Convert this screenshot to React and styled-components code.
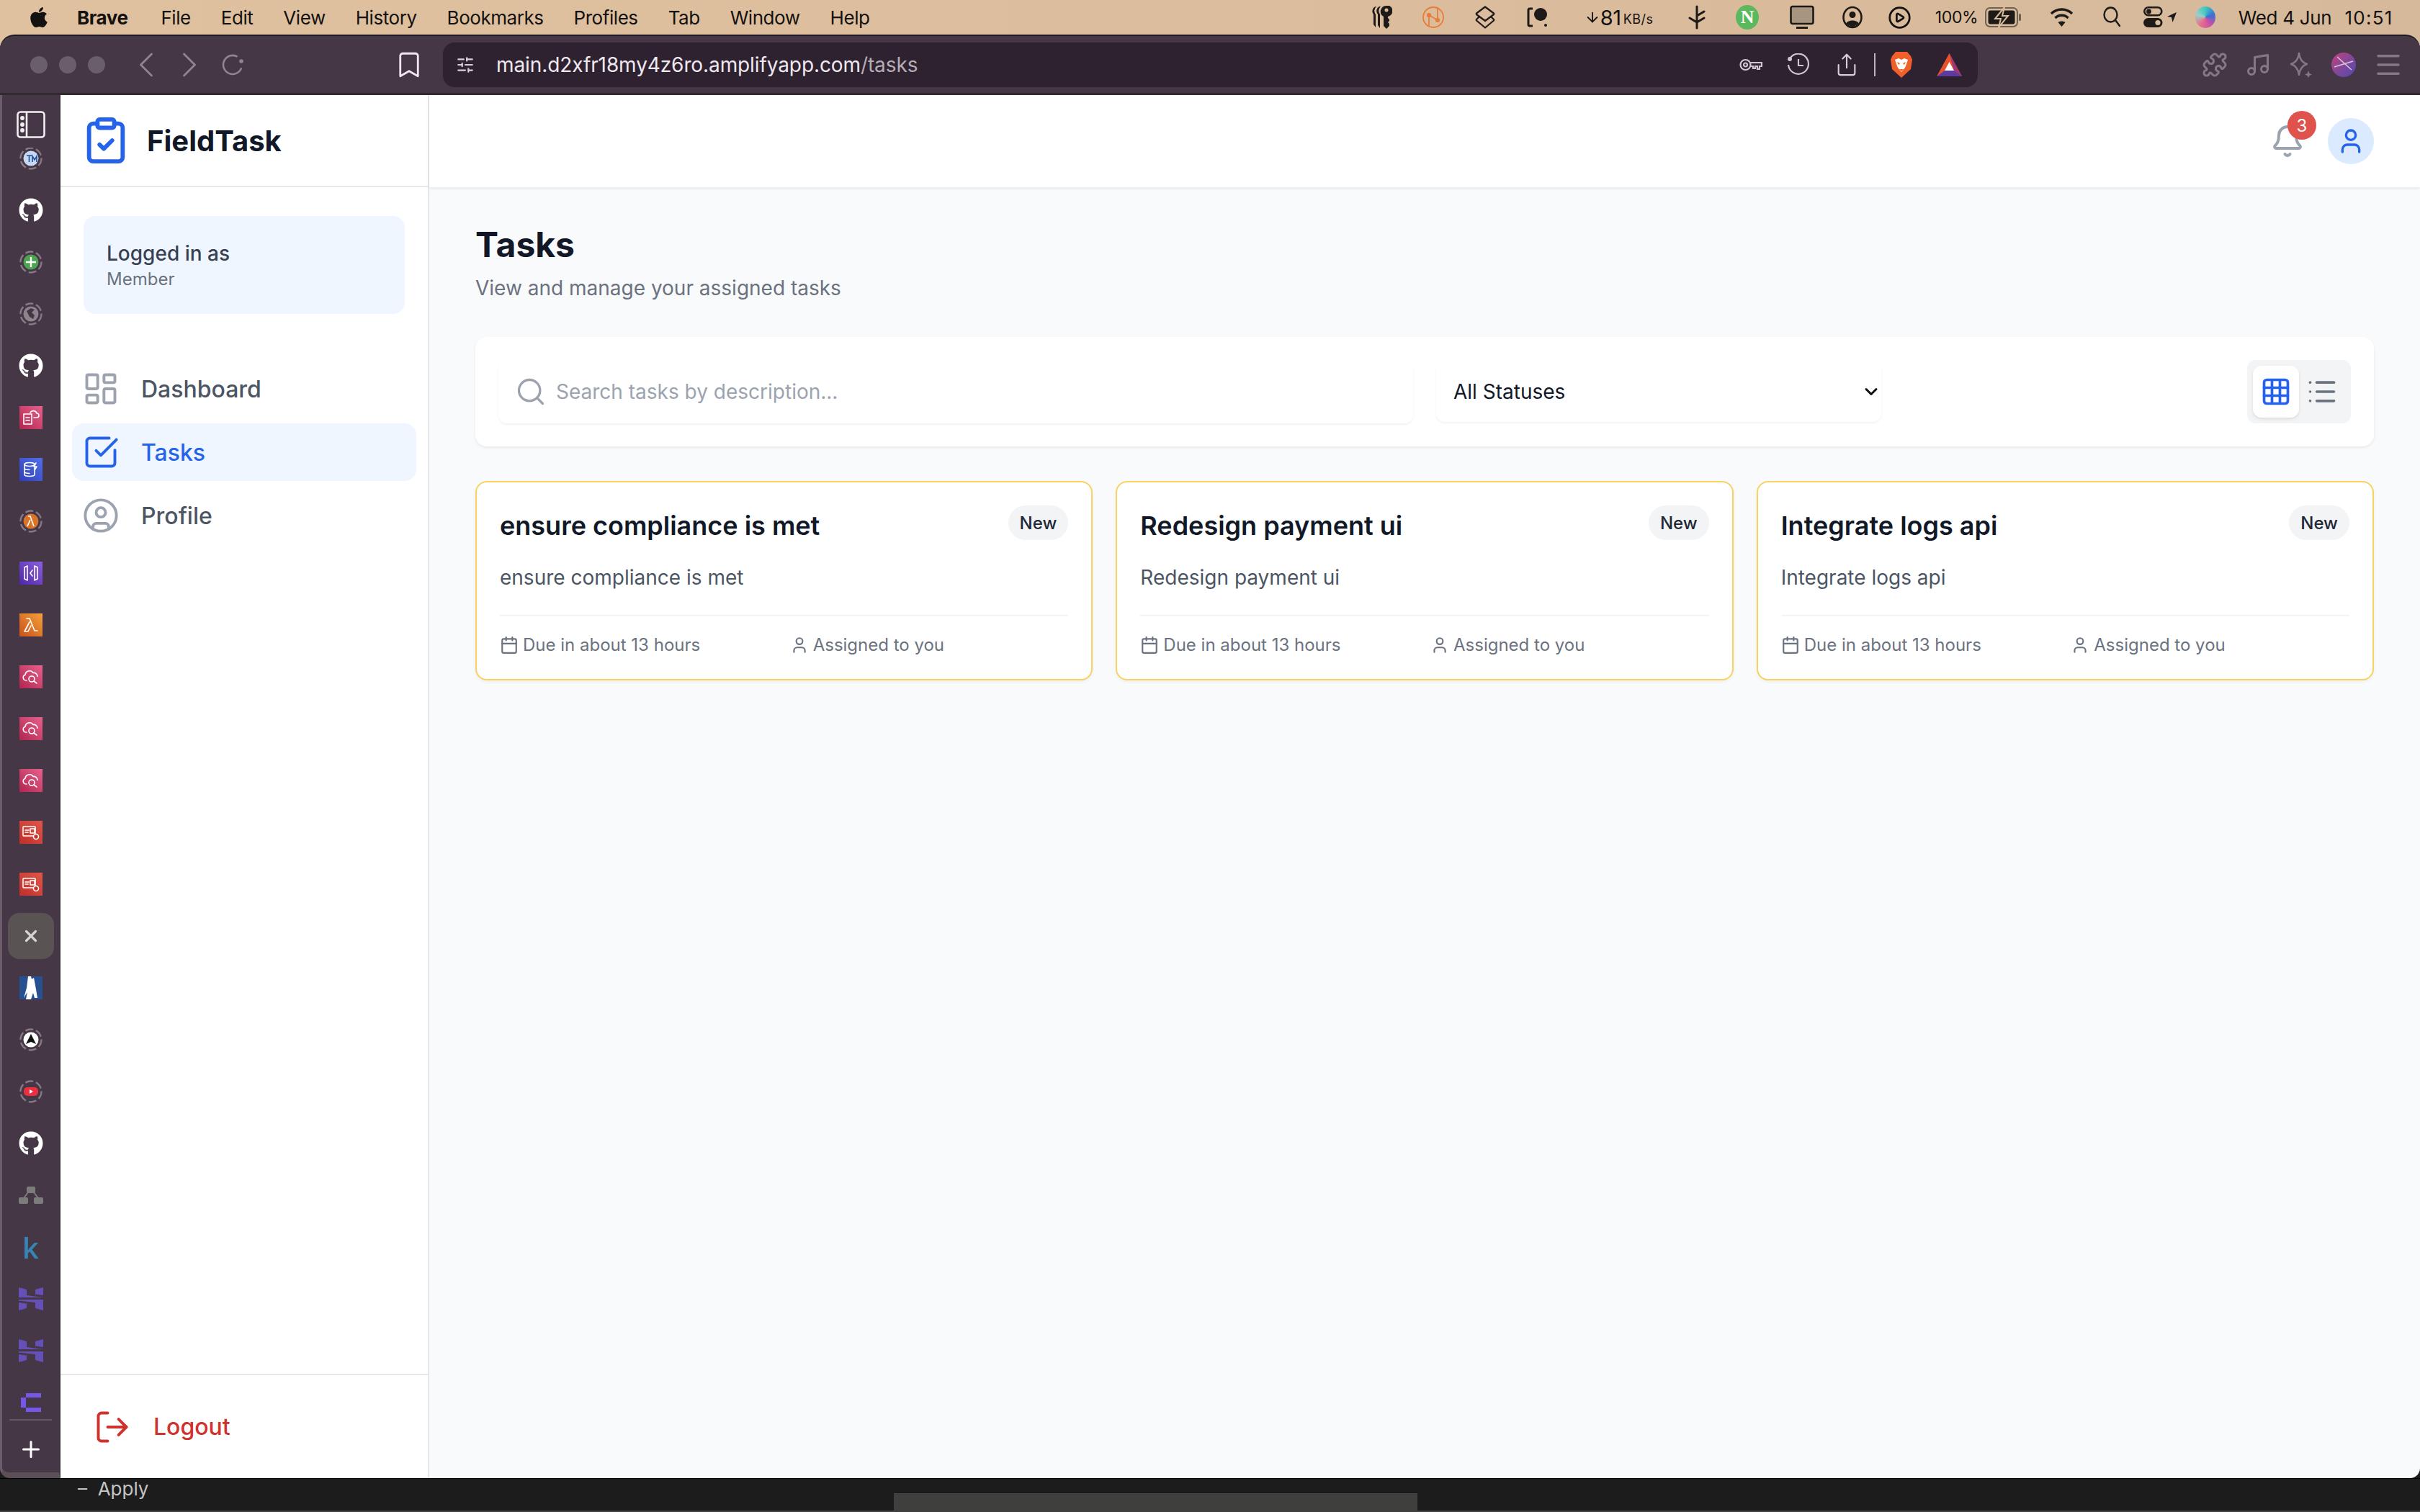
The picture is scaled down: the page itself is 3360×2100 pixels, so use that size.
import React from 'react';
import styled, { createGlobalStyle } from 'styled-components';
import { FaApple, FaGithub } from 'react-icons/fa';
import {
  Bell, Calendar, ChevronDown, ChevronLeft, ChevronRight, CircleUser, ClipboardCheck, Grid3x3,
  LayoutDashboard, List, LogOut, Search, SquareCheckBig, User, X, Plus,
  Bookmark, SlidersHorizontal, Share, Puzzle, Music, Menu, CirclePlay, ArrowDown,
} from 'lucide-react';

const GlobalStyle = createGlobalStyle`
  html, body { margin: 0; padding: 0; background: #1c1c1c; }
  * { box-sizing: border-box; }
  body { font-family: Inter, "Noto Sans", sans-serif; }
`;

const Screen = styled.div`
  width: 3360px;
  height: 2100px;
  display: flex;
  flex-direction: column;
  overflow: hidden;
  background: linear-gradient(90deg, #dfc19f 0%, #dcbd9d 50%, #d6b99b 100%);
`;

/* macOS menu bar */
const MenuBar = styled.div`
  height: 48px;
  flex: none;
  display: flex;
  align-items: center;
  justify-content: space-between;
  padding-left: 40px;
  padding-right: 36px;
  color: #141210;
  font-size: 26px;
`;
const MenuLeft = styled.div`
  display: flex;
  align-items: center;
  gap: 42px;
`;
const AppleMark = styled.span`
  display: flex;
  width: 28px;
  margin-right: -3px;
`;
const MenuItem = styled.span`
  font-weight: ${(p) => (p.$bold ? 700 : 400)};
  margin-right: ${(p) => (p.$bold ? 4 : 0)}px;
  letter-spacing: -0.45px;
`;
const StatusRow = styled.div`
  display: flex;
  align-items: center;
  height: 100%;
`;
const StatusSlot = styled.span`
  width: ${(p) => p.$w}px;
  margin-left: ${(p) => p.$gap || 0}px;
  flex: none;
  display: flex;
  align-items: center;
  justify-content: center;
  font-size: ${(p) => p.$size || 24}px;
  letter-spacing: ${(p) => p.$track ?? -0.3}px;
  white-space: nowrap;
  svg { flex: none; }
`;
const SpeedUnit = styled.span`
  font-size: 18px;
  letter-spacing: 0.4px;
  margin-left: 3px;
  margin-top: 4px;
`;
const GreenDot = styled.span`
  width: 32px;
  height: 34px;
  border-radius: 50%;
  background: #5cb85c;
  color: #fff;
  font-family: "Liberation Serif", serif;
  font-weight: 700;
  font-size: 26px;
  display: flex;
  align-items: center;
  justify-content: center;
`;
const SiriDot = styled.span`
  width: 28px;
  height: 30px;
  border-radius: 50%;
  background: conic-gradient(#40c8c0, #3b6fd6, #c84fa8, #e8708a, #9ad0c8, #40c8c0);
`;

/* browser window */
const BrowserWindow = styled.div`
  flex: 1;
  min-height: 0;
  display: flex;
  flex-direction: column;
  border-radius: 20px 20px 0 0;
  background: #1c1c1c;
  border-top: 2px solid #1f1a1f;
  overflow: hidden;
`;
const Toolbar = styled.div`
  height: 82px;
  flex: none;
  display: flex;
  align-items: center;
  background: #463746;
  border-bottom: 3px solid #302a30;
  padding-left: 42px;
  color: #8f858f;
`;
const TrafficLights = styled.div`
  display: flex;
  gap: 16px;
  width: 131px;
`;
const Light = styled.span`
  width: 24px;
  height: 24px;
  border-radius: 50%;
  background: #6b5e6b;
`;
const NavButtons = styled.div`
  display: flex;
  align-items: center;
  width: 374px;
`;
const BookmarkSlot = styled.div`
  display: flex;
  width: 68px;
  color: #efe9ef;
`;
const UrlBar = styled.div`
  width: 2131px;
  height: 62px;
  flex: none;
  display: flex;
  align-items: center;
  background: #2e2230;
  border-radius: 16px;
  padding-left: 18px;
  color: #d8d0d8;
`;
const UrlText = styled.span`
  margin-left: 30px;
  flex: 1;
  font-size: 28px;
  color: #efe8ef;
  letter-spacing: -0.1px;
`;
const UrlPath = styled.span`
  color: #b5abb5;
`;
const UrlIcons = styled.div`
  display: flex;
  align-items: center;
  gap: 34px;
  padding-right: 22px;
`;
const UrlDivider = styled.span`
  width: 2px;
  height: 32px;
  margin: 0 -13px;
  background: #bdb4bd;
`;
const ExtensionIcons = styled.div`
  display: flex;
  align-items: center;
  gap: 24px;
  margin-left: 311px;
  color: #837983;
`;
const Workspace = styled.div`
  flex: 1;
  min-height: 0;
  display: flex;
  border-bottom: 1px solid #000;
`;

/* vertical tab strip */
const TabStrip = styled.div`
  width: 84px;
  flex: none;
  display: flex;
  flex-direction: column;
  background: #463746;
  border-left: 3px solid #6a5c69;
  border-right: 2px solid #3d3240;
  border-bottom: 8px solid #5c5058;
  border-radius: 0 0 0 14px;
`;
const StripToggle = styled.div`
  height: 73px;
  flex: none;
  display: flex;
  align-items: center;
  justify-content: center;
  color: #f2eef2;
  padding-top: 8px;
`;
const TabList = styled.div`
  flex: 1;
  min-height: 0;
  overflow: hidden;
`;
const TabItem = styled.div`
  height: 72px;
  display: flex;
  align-items: center;
  justify-content: center;
  &:first-child { margin-top: -21px; }
`;
const TabClose = styled.div`
  width: 64px;
  height: 64px;
  border-radius: 16px;
  background: #595354;
  color: #d5d2d2;
  display: flex;
  align-items: center;
  justify-content: center;
`;
const ServiceTile = styled.div`
  width: 32px;
  height: 32px;
  background: linear-gradient(45deg, ${(p) => p.$from}, ${(p) => p.$to});
  display: flex;
  align-items: center;
  justify-content: center;
`;
const GithubMark = styled(FaGithub)`
  color: #fff;
`;
const StripDivider = styled.div`
  height: 2px;
  margin: 8px 10px 0;
  flex: none;
  background: #625762;
`;
const StripPlus = styled.div`
  height: 72px;
  flex: none;
  padding-top: 8px;
  display: flex;
  align-items: center;
  justify-content: center;
  color: #fff;
`;
const KLetter = styled.span`
  color: #3585b5;
  font-size: 40px;
  font-weight: 600;
  font-family: "Open Sans", sans-serif;
`;

/* FieldTask app */
const AppShell = styled.div`
  flex: 1;
  min-width: 0;
  display: flex;
  background: #f9fafb;
  border-radius: 0 0 14px 0;
  overflow: hidden;
`;
const Sidebar = styled.aside`
  width: 512px;
  flex: none;
  display: flex;
  flex-direction: column;
  background: #fff;
  border-right: 2px solid #e5e7eb;
`;
const Brand = styled.div`
  height: 128px;
  flex: none;
  display: flex;
  align-items: center;
  gap: 22px;
  padding-left: 28px;
  border-bottom: 2px solid #e5e7eb;
  color: #2563eb;
`;
const BrandName = styled.span`
  font-size: 40px;
  font-weight: 700;
  color: #111827;
`;
const UserCard = styled.div`
  margin: 40px 32px 0;
  height: 136px;
  padding: 32px;
  background: #eff6ff;
  border-radius: 16px;
`;
const UserLabel = styled.div`
  font-size: 28px;
  line-height: 40px;
  font-weight: 500;
  color: #374151;
`;
const UserRole = styled.div`
  font-size: 24px;
  line-height: 32px;
  color: #6b7280;
`;
const Nav = styled.nav`
  margin-top: 64px;
  padding: 0 16px;
  display: flex;
  flex-direction: column;
  gap: 8px;
  flex: 1;
`;
const NavItem = styled.div`
  height: 80px;
  display: flex;
  align-items: center;
  gap: 30px;
  padding-left: 14px;
  border-radius: 16px;
  font-size: 32px;
  font-weight: 500;
  background: ${(p) => (p.$active ? '#eff6ff' : 'transparent')};
  color: ${(p) => (p.$active ? '#2563eb' : '#4b5563')};
  svg { color: ${(p) => (p.$active ? '#2563eb' : '#9ca3af')}; flex: none; }
`;
const LogoutRow = styled.div`
  height: 145px;
  flex: none;
  border-top: 2px solid #e5e7eb;
  display: flex;
  align-items: center;
  gap: 31px;
  padding-left: 46px;
  color: #d0312d;
  font-size: 32px;
  font-weight: 500;
`;
const Main = styled.main`
  flex: 1;
  min-width: 0;
  display: flex;
  flex-direction: column;
`;
const TopBar = styled.header`
  height: 128px;
  flex: none;
  display: flex;
  align-items: center;
  justify-content: flex-end;
  gap: 32px;
  padding-right: 64px;
  background: #fff;
  box-shadow: 0 2px 4px rgba(0, 0, 0, 0.08);
`;
const BellWrap = styled.div`
  position: relative;
  width: 48px;
  height: 48px;
  color: #9ca3af;
`;
const BellBadge = styled.span`
  position: absolute;
  top: -18px;
  right: -16px;
  width: 40px;
  height: 40px;
  border-radius: 50%;
  background: #e0524c;
  color: #fff;
  font-size: 24px;
  display: flex;
  align-items: center;
  justify-content: center;
`;
const Avatar = styled.div`
  width: 64px;
  height: 64px;
  border-radius: 50%;
  background: #dbeafe;
  color: #2563eb;
  display: flex;
  align-items: center;
  justify-content: center;
`;
const Content = styled.div`
  padding: 48px 64px;
`;
const PageTitle = styled.h1`
  margin: 0;
  font-size: 48px;
  line-height: 64px;
  font-weight: 700;
  color: #111827;
`;
const PageSub = styled.p`
  margin: 8px 0 0;
  font-size: 28px;
  line-height: 40px;
  color: #6b7280;
`;
const FilterCard = styled.div`
  margin-top: 48px;
  height: 152px;
  padding: 32px;
  display: flex;
  align-items: center;
  background: #fff;
  border-radius: 16px;
  box-shadow: 0 2px 4px rgba(0, 0, 0, 0.07);
`;
const SearchBox = styled.div`
  width: 1270px;
  height: 88px;
  display: flex;
  align-items: center;
  gap: 13px;
  padding-left: 23px;
  border-radius: 12px;
  background: #fff;
  box-shadow: 0 2px 3px rgba(0, 0, 0, 0.05);
  color: #9ca3af;
  font-size: 28px;
`;
const StatusSelect = styled.div`
  width: 618px;
  height: 84px;
  margin-left: 32px;
  display: flex;
  align-items: center;
  justify-content: space-between;
  padding: 0 0 0 24px;
  border-radius: 12px;
  background: #fff;
  box-shadow: 0 2px 3px rgba(0, 0, 0, 0.05);
  color: #111827;
  font-size: 28px;
`;
const ViewToggle = styled.div`
  margin-left: auto;
  width: 144px;
  height: 88px;
  padding: 8px;
  display: flex;
  background: #f3f4f6;
  border-radius: 12px;
`;
const ViewButton = styled.div`
  width: 64px;
  height: 72px;
  display: flex;
  align-items: center;
  justify-content: center;
  border-radius: 12px;
  background: ${(p) => (p.$active ? '#fff' : 'transparent')};
  box-shadow: ${(p) => (p.$active ? '0 2px 4px rgba(0, 0, 0, 0.1)' : 'none')};
  color: ${(p) => (p.$active ? '#2563eb' : '#6b7280')};
`;
const TaskGrid = styled.div`
  margin-top: 48px;
  display: grid;
  grid-template-columns: repeat(3, 1fr);
  gap: 32px;
`;
const TaskCard = styled.article`
  height: 277px;
  padding: 32px;
  background: #fff;
  border: 2px solid #f9d262;
  border-radius: 16px;
  box-shadow: 0 2px 4px rgba(0, 0, 0, 0.05);
`;
const TaskHead = styled.div`
  display: flex;
  justify-content: space-between;
  align-items: flex-start;
`;
const TaskTitle = styled.h3`
  margin: 0;
  font-size: 36px;
  line-height: 56px;
  font-weight: 600;
  color: #111827;
`;
const StatusBadge = styled.span`
  height: 48px;
  padding: 0 16px;
  display: flex;
  align-items: center;
  border-radius: 24px;
  background: #f3f4f6;
  color: #1f2937;
  font-size: 24px;
  font-weight: 500;
`;
const TaskDesc = styled.p`
  margin: 24px 0 0;
  font-size: 28px;
  line-height: 40px;
  color: #4b5563;
`;
const TaskFooter = styled.div`
  margin-top: 32px;
  padding-top: 24px;
  border-top: 2px solid #f3f4f6;
  display: grid;
  grid-template-columns: 1fr 1fr;
  gap: 16px;
`;
const TaskMeta = styled.div`
  display: flex;
  align-items: center;
  gap: 6px;
  font-size: 24px;
  line-height: 32px;
  color: #6b7280;
`;
const BottomBar = styled.div`
  height: 46px;
  flex: none;
  display: flex;
  align-items: flex-start;
  background: #1c1c1c;
  border-bottom: 2px solid #444;
  color: #c4c4c4;
  font-size: 26px;
  line-height: 28px;
`;
const ApplyLabel = styled.span`
  width: 1241px;
  flex: none;
  padding-left: 108px;
`;
const PreviewThumb = styled.div`
  width: 727px;
  height: 29px;
  margin-top: 18px;
  background: #3f3f3d;
  border-top: 1px solid #000;
`;

const TabGlyph = ({ children }) => (
  <svg width="26" height="26" viewBox="0 0 26 26" fill="none" stroke="#fff" strokeWidth="1.6" strokeLinecap="round" strokeLinejoin="round">
    {children}
  </svg>
);

const CloudSearch = () => (
  <TabGlyph>
    <path d="M7 18H6a4 4 0 0 1-1-7.8A6 6 0 0 1 16 7.5a5 5 0 0 1 6 5" />
    <circle cx="14" cy="16" r="4" />
    <path d="m17 19 4 3" />
  </TabGlyph>
);

const IdCard = () => (
  <TabGlyph>
    <rect x="2" y="5" width="17" height="13" rx="1" />
    <path d="M5 10h5M5 13h4" />
    <rect x="12" y="8" width="6" height="6" />
    <circle cx="20" cy="19" r="3.5" fill="#c5332e" />
  </TabGlyph>
);

const Lambda = () => (
  <TabGlyph>
    <path d="M7 4h4l7 17h4M11 9 4 22h5l4-8" />
  </TabGlyph>
);

const tile = (from, to, glyph) => <ServiceTile $from={from} $to={to}>{glyph}</ServiceTile>;

const RingIcon = ({ fill, children }) => (
  <svg width="32" height="32" viewBox="0 0 32 32">
    <circle cx="16" cy="16" r="14.5" fill="none" stroke="#857a85" strokeWidth="2.4" strokeDasharray="11 4" />
    <circle cx="16" cy="16" r="10.5" fill={fill} />
    {children}
  </svg>
);

const HLogo = () => (
  <svg width="34" height="32" viewBox="0 0 34 32" fill="#6550b8">
    <path d="M0 0l11 3v8l23 3H0z" />
    <path d="M23 3l11-3v11l-11-1.500z" />
    <path d="M0 17h34v15l-11-3v-8L0 18.500z" />
    <path d="M0 21l11 1.500V29L0 32z" />
  </svg>
);

const GithubTab = () => <GithubMark size={34} />;

const tabs = [
  <RingIcon fill="#c7d8f0"><path d="M10 12h7M13.500 12v9M18 21v-8l3 5 3-5v8" fill="none" stroke="#1f4fa0" strokeWidth="1.6" /></RingIcon>,
  <GithubTab />,
  <RingIcon fill="#4ca350"><path d="M16 9v14M9 16h14" stroke="#fff" strokeWidth="2.4" /></RingIcon>,
  <RingIcon fill="#8d848d"><path d="M10 12l6-4 5 2-4 4 4 4-2 5-5-3z" fill="#463746" /></RingIcon>,
  <GithubTab />,
  tile('#b0264f', '#e8608c', <TabGlyph><rect x="3" y="8" width="11" height="14" /><path d="M6 13h5M6 17h5M12 6a5 5 0 0 1 9 1 3 3 0 0 1 0 6h-4" /></TabGlyph>),
  tile('#2e3fb8', '#5270e8', <TabGlyph><ellipse cx="11" cy="6" rx="7" ry="2.5" /><path d="M4 6v14c0 1.500 3 2.500 7 2.500s7-1 7-2.500V6M4 11c0 1.500 3 2.500 7 2.500M4 16c0 1.500 3 2.500 7 2.500M20 4l-3 5h4l-3 5" /></TabGlyph>),
  <RingIcon fill="#d9742a"><path d="M12 9h3l5 14M15 14l-4 9" fill="none" stroke="#fff" strokeWidth="1.6" /></RingIcon>,
  tile('#4d27a8', '#8c5fe0', <TabGlyph><path d="M8 3 4 5v16l4 2zM18 3l4 2v16l-4 2zM15 9l-3 4 3 4" /></TabGlyph>),
  tile('#c8511b', '#f5a13a', <Lambda />),
  tile('#b0264f', '#e8608c', <CloudSearch />),
  tile('#b0264f', '#e8608c', <CloudSearch />),
  tile('#b0264f', '#e8608c', <CloudSearch />),
  tile('#bd2f2a', '#e0574a', <IdCard />),
  tile('#bd2f2a', '#e0574a', <IdCard />),
  <TabClose><X size={26} strokeWidth={3} /></TabClose>,
  <ServiceTile $from="#26508f" $to="#26508f">
    <svg width="26" height="32" viewBox="0 0 26 32" fill="#fff"><path d="M9 0h4l1 4 3-2 3 16 2 12h-4l-2-7-3 9H6l2-10-5 8 4-14z" /></svg>
  </ServiceTile>,
  <RingIcon fill="#fff"><path d="M16 8l7 14-7-3-7 3z" fill="#111" /></RingIcon>,
  <RingIcon fill="none"><rect x="6" y="10" width="20" height="12" rx="5" fill="#ec2f3f" /><path d="M14 13l5 3-5 3z" fill="#fff" /></RingIcon>,
  <GithubTab />,
  <svg width="34" height="24" viewBox="0 0 34 24" fill="#7c7c7c"><rect x="11" y="0" width="12" height="9" rx="2" /><rect x="0" y="15" width="13" height="9" rx="2" /><rect x="21" y="15" width="13" height="9" rx="2" /><path d="M13 8l-6 8M21 8l6 8" stroke="#7c7c7c" strokeWidth="2" /></svg>,
  <KLetter>k</KLetter>,
  <HLogo />,
  <HLogo />,
  <svg width="28" height="26" viewBox="0 0 28 26" fill="#7558e8"><path d="M7 0h21v6H7zM0 6h7v14H0zM7 20h21v6H7z" /></svg>,
];

const tasks = ['ensure compliance is met', 'Redesign payment ui', 'Integrate logs api'];

const ink = '#1d1a17';

function StatusIcons() {
  return (
    <StatusRow>
      <StatusSlot $w={28}>
        <svg width="28" height="32" viewBox="0 0 28 32" fill={ink}>
          <path d="M5 1a7 7 0 0 0-3 11v14l3 4V12a8 8 0 0 1 1-11z" />
          <path d="M10 1a7 7 0 0 0-2 11v15l3 4V12a8 8 0 0 1 1-11z" />
          <path d="M20 0a8 8 0 0 0-4 15v13l4 4 4-4v-3l-2-2 2-2v-2l-2-2V15a8 8 0 0 0 2-15zm0 3.500a2.500 2.500 0 1 1 0 5 2.500 2.500 0 0 1 0-5z" fillRule="evenodd" />
        </svg>
      </StatusSlot>
      <StatusSlot $w={30} $gap={42}>
        <svg width="30" height="30" viewBox="0 0 30 30" fill="none" stroke="#e97c35" strokeWidth="1.8">
          <circle cx="15" cy="15" r="14" />
          <path d="M9 28V12l12 7V1" />
          <circle cx="9" cy="12" r="2.200" fill="#e97c35" />
          <circle cx="21" cy="19" r="2.200" fill="#e97c35" />
        </svg>
      </StatusSlot>
      <StatusSlot $w={28} $gap={43}>
        <svg width="28" height="32" viewBox="0 0 28 32" fill="none" stroke={ink} strokeWidth="2.2" strokeLinejoin="round">
          <path d="M14 1.500 26 10.500a1 1 0 0 1 0 1.500L14 21 2 12a1 1 0 0 1 0-1.500z" />
          <path d="M6 15 2 19a1 1 0 0 0 0 1.500L14 30.500 26 20.500a1 1 0 0 0 0-1.500l-4-4" />
        </svg>
      </StatusSlot>
      <StatusSlot $w={30} $gap={44}>
        <svg width="30" height="28" viewBox="0 0 30 28" fill={ink}>
          <path d="M8 2H4a2 2 0 0 0-2 2v20a2 2 0 0 0 2 2h4" fill="none" stroke={ink} strokeWidth="3" />
          <circle cx="19" cy="10" r="9" />
          <circle cx="26" cy="25" r="2" />
        </svg>
      </StatusSlot>
      <StatusSlot $w={95} $gap={50} $size={29}>
        <ArrowDown size={22} strokeWidth={2} />81<SpeedUnit>KB/s</SpeedUnit>
      </StatusSlot>
      <StatusSlot $w={24} $gap={49}>
        <svg width="24" height="34" viewBox="0 0 24 34" fill="none" stroke={ink} strokeWidth="3" strokeLinecap="round">
          <path d="M12 2v30M2 18l10 6 10-6M22 9l-10 6" />
        </svg>
      </StatusSlot>
      <StatusSlot $w={32} $gap={42}><GreenDot>N</GreenDot></StatusSlot>
      <StatusSlot $w={34} $gap={43}>
        <svg width="34" height="34" viewBox="0 0 34 34">
          <rect x="1.500" y="2" width="31" height="24" rx="2.500" fill="#a8957f" stroke={ink} strokeWidth="2.600" />
          <rect x="9" y="30" width="16" height="3" fill={ink} />
        </svg>
      </StatusSlot>
      <StatusSlot $w={28} $gap={39}>
        <svg width="28" height="32" viewBox="0 0 28 32">
          <ellipse cx="14" cy="16" rx="12.500" ry="14" fill="none" stroke={ink} strokeWidth="2.600" />
          <circle cx="14" cy="12.500" r="4.500" fill={ink} />
          <path d="M5 25c2-6 16-6 18 0l-9 5z" fill={ink} />
        </svg>
      </StatusSlot>
      <StatusSlot $w={28} $gap={37}><CirclePlay size={33} strokeWidth={2} /></StatusSlot>
      <StatusSlot $w={57} $gap={37} $size={23}>100%</StatusSlot>
      <StatusSlot $w={50} $gap={11}>
        <svg width="50" height="28" viewBox="0 0 50 28">
          <rect x="1" y="1" width="44" height="26" rx="6" fill="none" stroke="#6f6250" strokeWidth="2" />
          <rect x="4.500" y="4.500" width="37" height="19" rx="3" fill={ink} />
          <rect x="47" y="9" width="3" height="10" rx="1.500" fill="#6f6250" />
          <path d="M27 0 14 16h8l-3 12 13-16h-8z" fill={ink} stroke="#d9bc9c" strokeWidth="2" />
        </svg>
      </StatusSlot>
      <StatusSlot $w={33} $gap={40}>
        <svg width="33" height="28" viewBox="0 0 33 28" fill="none" stroke={ink} strokeWidth="3.400">
          <path d="M2 9c8-8 21-8 29 0M7.500 15c5-5 13-5 18 0" />
          <path d="M16.500 27l-5-6c3-2 7-2 10 0z" fill={ink} stroke="none" />
        </svg>
      </StatusSlot>
      <StatusSlot $w={24} $gap={41}>
        <svg width="24" height="30" viewBox="0 0 24 30" fill="none" stroke={ink} strokeWidth="2.400" strokeLinecap="round">
          <ellipse cx="10.500" cy="11.500" rx="9" ry="10" />
          <path d="m17 19 6 8" />
        </svg>
      </StatusSlot>
      <StatusSlot $w={46} $gap={32}>
        <svg width="46" height="30" viewBox="0 0 46 30" fill={ink}>
          <rect x="1.300" y="1.300" width="24" height="11" rx="5.500" fill="none" stroke={ink} strokeWidth="2.600" />
          <circle cx="7.500" cy="7" r="3.400" />
          <rect x="0" y="16" width="26.500" height="13" rx="6.500" />
          <circle cx="20" cy="22.500" r="3.600" fill="#d9bd9d" />
          <path d="M46 8l-13 6 6 1 1.500 7z" />
        </svg>
      </StatusSlot>
      <StatusSlot $w={28} $gap={26}><SiriDot /></StatusSlot>
      <StatusSlot $w={127} $gap={33} $size={26}>Wed 4 Jun</StatusSlot>
      <StatusSlot $w={70} $gap={18} $size={26} $track={1.2}>10:51</StatusSlot>
    </StatusRow>
  );
}

export default function App() {
  return (
    <Screen>
      <GlobalStyle />
      <MenuBar>
        <MenuLeft>
          <AppleMark><FaApple size={32} /></AppleMark>
          <MenuItem $bold>Brave</MenuItem>
          {['File', 'Edit', 'View', 'History', 'Bookmarks', 'Profiles', 'Tab', 'Window', 'Help'].map((m) => (
            <MenuItem key={m}>{m}</MenuItem>
          ))}
        </MenuLeft>
        <StatusIcons />
      </MenuBar>

      <BrowserWindow>
        <Toolbar>
          <TrafficLights><Light /><Light /><Light /></TrafficLights>
          <NavButtons>
            <ChevronLeft size={60} strokeWidth={1.1} />
            <ChevronRight size={60} strokeWidth={1.1} />
            <svg width="60" height="36" viewBox="-14 0 60 36" fill="none" stroke="currentColor" strokeWidth="2.600">
              <path d="M22.500 6.700A13 13 0 1 0 28.200 22.400" />
              <circle cx="28" cy="13" r="2.800" fill="currentColor" stroke="none" />
            </svg>
          </NavButtons>
          <BookmarkSlot><Bookmark size={42} strokeWidth={1.6} /></BookmarkSlot>
          <UrlBar>
            <SlidersHorizontal size={26} />
            <UrlText>main.d2xfr18my4z6ro.amplifyapp.com<UrlPath>/tasks</UrlPath></UrlText>
            <UrlIcons>
              <svg width="32" height="18" viewBox="0 0 32 18" fill="none" stroke="#cfc7cf" strokeWidth="2.200">
                <circle cx="8.500" cy="9" r="7" />
                <circle cx="8.500" cy="9" r="2.500" />
                <path d="M15.500 6H31v5h-3v4h-3v-4h-3v3h-3v-3h-3.500" />
              </svg>
              <svg width="32" height="32" viewBox="0 0 32 32" fill="none" stroke="#cfc7cf" strokeWidth="2.200">
                <path d="M5 6a14 14 0 1 1-3 10" />
                <circle cx="4" cy="8" r="3" fill="#cfc7cf" stroke="none" />
                <path d="M16 8v9h7" />
              </svg>
              <Share size={34} strokeWidth={1.5} />
              <UrlDivider />
              <svg width="30" height="36" viewBox="0 0 30 36">
                <path d="M7 0h16l5 6 2 5-2 13-13 12L2 24 0 11l2-5z" fill="#f1602b" />
                <path d="M6 11l5-2 4 2 4-2 5 2-2 6-2 5-5 6-5-6-2-5z" fill="#fff" />
                <path d="M9 14l4 2-2 2zM21 14l-4 2 2 2zM12 24h6l-3 3zM15 17v6" fill="#f1602b" />
              </svg>
              <svg width="35" height="32" viewBox="0 0 35 32">
                <path d="M17.500 0 35 32H0z" fill="#e8532a" />
                <path d="M17.500 0 35 32 24 24z" fill="#a0367a" />
                <path d="M0 32l11-8h13l11 8z" fill="#5c3a9e" />
                <path d="M17.500 12 24 24H11z" fill="#fff" />
              </svg>
            </UrlIcons>
          </UrlBar>
          <ExtensionIcons>
            <Puzzle size={36} strokeWidth={2} />
            <Music size={36} strokeWidth={2} />
            <svg width="36" height="36" viewBox="0 0 36 36" fill="none" stroke="currentColor" strokeWidth="2.400" strokeLinejoin="round">
              <path d="M15 2c1 9 5 13 11 15-6 2-10 6-11 15-1-9-5-13-11-15 6-2 10-6 11-15z" />
              <path d="M28 26l1.500 4 3.500 1.500-3.500 1.500L28 36l-1.500-3-3.500-1.500 3.500-1.500z" fill="currentColor" stroke="none" />
            </svg>
            <svg width="34" height="34" viewBox="0 0 34 34">
              <defs>
                <linearGradient id="ava" x1="0" y1="0" x2="1" y2="1">
                  <stop offset="0" stopColor="#c2437e" />
                  <stop offset="1" stopColor="#4a4ab0" />
                </linearGradient>
              </defs>
              <circle cx="17" cy="17" r="17" fill="url(#ava)" />
              <path d="M8 6l20 18M4 20l26-8" stroke="#d8c8d8" strokeWidth="1.500" />
            </svg>
            <Menu size={42} strokeWidth={2} />
          </ExtensionIcons>
        </Toolbar>

        <Workspace>
          <TabStrip>
            <StripToggle>
              <svg width="40" height="38" viewBox="0 0 40 38" fill="none" stroke="currentColor" strokeWidth="2.600">
                <rect x="1.500" y="1.500" width="37" height="35" rx="4" />
                <path d="M14 2v34" />
                <circle cx="8" cy="10" r="1.600" fill="currentColor" />
                <circle cx="8" cy="19" r="1.600" fill="currentColor" />
                <circle cx="8" cy="27" r="1.600" fill="currentColor" />
              </svg>
            </StripToggle>
            <TabList>
              {tabs.map((t, i) => <TabItem key={i}>{t}</TabItem>)}
            </TabList>
            <StripDivider />
            <StripPlus><Plus size={36} strokeWidth={2} /></StripPlus>
          </TabStrip>

          <AppShell>
            <Sidebar>
              <Brand>
                <ClipboardCheck size={70} strokeWidth={2} />
                <BrandName>FieldTask</BrandName>
              </Brand>
              <UserCard>
                <UserLabel>Logged in as</UserLabel>
                <UserRole>Member</UserRole>
              </UserCard>
              <Nav>
                <NavItem><LayoutDashboard size={52} strokeWidth={1.8} />Dashboard</NavItem>
                <NavItem $active><SquareCheckBig size={52} strokeWidth={1.8} />Tasks</NavItem>
                <NavItem><CircleUser size={52} strokeWidth={1.8} />Profile</NavItem>
              </Nav>
              <LogoutRow><LogOut size={52} strokeWidth={1.8} />Logout</LogoutRow>
            </Sidebar>

            <Main>
              <TopBar>
                <BellWrap>
                  <Bell size={48} strokeWidth={2} />
                  <BellBadge>3</BellBadge>
                </BellWrap>
                <Avatar><User size={40} strokeWidth={2} /></Avatar>
              </TopBar>
              <Content>
                <PageTitle>Tasks</PageTitle>
                <PageSub>View and manage your assigned tasks</PageSub>
                <FilterCard>
                  <SearchBox>
                    <Search size={44} strokeWidth={1.8} />
                    Search tasks by description...
                  </SearchBox>
                  <StatusSelect>
                    All Statuses
                    <ChevronDown size={28} strokeWidth={2.6} color="#111" />
                  </StatusSelect>
                  <ViewToggle>
                    <ViewButton $active><Grid3x3 size={44} strokeWidth={2} /></ViewButton>
                    <ViewButton><List size={44} strokeWidth={2} /></ViewButton>
                  </ViewToggle>
                </FilterCard>
                <TaskGrid>
                  {tasks.map((task) => (
                    <TaskCard key={task}>
                      <TaskHead>
                        <TaskTitle>{task}</TaskTitle>
                        <StatusBadge>New</StatusBadge>
                      </TaskHead>
                      <TaskDesc>{task}</TaskDesc>
                      <TaskFooter>
                        <TaskMeta><Calendar size={26} strokeWidth={2} />Due in about 13 hours</TaskMeta>
                        <TaskMeta><User size={26} strokeWidth={2} />Assigned to you</TaskMeta>
                      </TaskFooter>
                    </TaskCard>
                  ))}
                </TaskGrid>
              </Content>
            </Main>
          </AppShell>
        </Workspace>

        <BottomBar>
          <ApplyLabel>–&nbsp; Apply</ApplyLabel>
          <PreviewThumb />
        </BottomBar>
      </BrowserWindow>
    </Screen>
  );
}
